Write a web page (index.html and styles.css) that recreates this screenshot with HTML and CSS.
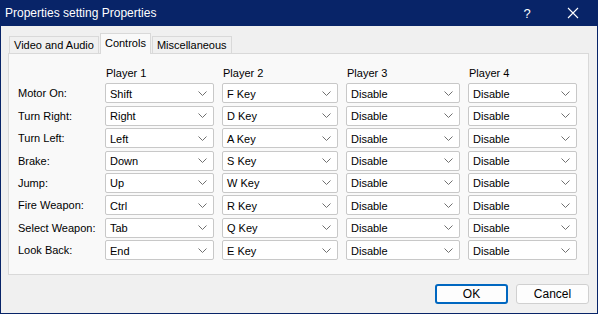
FILE: index.html
```html
<!DOCTYPE html>
<html lang="en">

<head>
    <meta charset="UTF-8">
    <title>Properties setting Properties</title>
    <link rel="stylesheet" href="styles.css">
</head>

<body>
    <div class="window">
        <!-- Title Bar -->
        <div class="title-bar">
            <span class="title">Properties setting Properties</span>
            <span class="title-btn help">?</span>
            <span class="title-btn close">
                <svg width="12" height="12" viewBox="0 0 12 12"><path d="M1 1L11 11M11 1L1 11" stroke="#fff" stroke-width="1.1" fill="none"/></svg>
            </span>
        </div>

        <div class="dialog-body">
            <!-- Tabs -->
            <div class="tabs">
                <div class="tab">Video and Audio</div>
                <div class="tab active">Controls</div>
                <div class="tab">Miscellaneous</div>
            </div>

            <!-- Controls Panel -->
            <div class="panel">
                <div class="controls-grid" id="controls-grid">
                    <div></div>
                    <div class="col-head">Player 1</div>
                    <div class="col-head">Player 2</div>
                    <div class="col-head">Player 3</div>
                    <div class="col-head">Player 4</div>
                </div>
            </div>

            <!-- Buttons -->
            <div class="button-row">
                <button class="dlg-button default">OK</button>
                <button class="dlg-button">Cancel</button>
            </div>
        </div>
    </div>

    <script>
        const actions = [
            { label: "Motor On:", keys: ["Shift", "F Key"] },
            { label: "Turn Right:", keys: ["Right", "D Key"] },
            { label: "Turn Left:", keys: ["Left", "A Key"] },
            { label: "Brake:", keys: ["Down", "S Key"] },
            { label: "Jump:", keys: ["Up", "W Key"] },
            { label: "Fire Weapon:", keys: ["Ctrl", "R Key"] },
            { label: "Select Weapon:", keys: ["Tab", "Q Key"] },
            { label: "Look Back:", keys: ["End", "E Key"] }
        ];

        const chevron = '<svg width="9" height="5" viewBox="0 0 9 5"><path d="M0.5 0.5L4.5 4.5L8.5 0.5" stroke="#707070" fill="none"/></svg>';

        function buildGrid() {
            const grid = document.getElementById('controls-grid');
            actions.forEach(action => {
                const label = document.createElement('div');
                label.className = 'row-label';
                label.textContent = action.label;
                grid.appendChild(label);

                const values = [action.keys[0], action.keys[1], "Disable", "Disable"];
                values.forEach(value => {
                    const combo = document.createElement('div');
                    combo.className = 'combo';
                    combo.innerHTML = `<span>${value}</span>${chevron}`;
                    grid.appendChild(combo);
                });
            });
        }

        buildGrid();
    </script>
</body>

</html>
```

FILE: styles.css
```css
/* Base Styles */
body {
    margin: 0;
    padding: 0;
    font-family: 'Liberation Sans', Arial, sans-serif;
    font-size: 11px;
    color: #000;
    background-color: #f0f0f0;
}

.window {
    width: 598px;
    height: 314px;
    box-sizing: border-box;
    border: 1px solid #082468;
    border-top: none;
    background-color: #f0f0f0;
    display: flex;
    flex-direction: column;
}

.title-bar {
    height: 26px;
    background-color: #082468;
    color: white;
    display: flex;
    align-items: center;
    margin: 0 -1px;
    padding-left: 5px;
}

.title {
    font-size: 12px;
    flex: 1;
}

.title-btn {
    width: 46px;
    display: flex;
    justify-content: center;
    align-items: center;
    font-size: 13px;
}

.close {
    margin-right: 2px;
}

.dialog-body {
    flex: 1;
    padding: 7px 8px 0 7px;
    display: flex;
    flex-direction: column;
}

/* Tabs */
.tabs {
    display: flex;
    align-items: flex-end;
    height: 20px;
    padding-left: 1px;
}

.tab {
    height: 17px;
    box-sizing: border-box;
    padding: 0 4px;
    border: 1px solid #d9d9d9;
    border-bottom: none;
    background-color: #f0f0f0;
    font-size: 11px;
    line-height: 16px;
    margin-right: 1px;
}

.tab.active {
    height: 21px;
    margin-bottom: -1px;
    background-color: #f9f9f9;
    position: relative;
    z-index: 1;
    line-height: 18px;
}

.panel {
    height: 222px;
    box-sizing: border-box;
    border: 1px solid #d9d9d9;
    background-color: #f9f9f9;
    padding: 11px 0 0 9px;
}

.controls-grid {
    display: grid;
    grid-template-columns: 79px 109px 116px 114px 109px;
    grid-template-rows: 16px;
    grid-auto-rows: 20px;
    column-gap: 8px;
    row-gap: 2.4px;
}

.col-head {
    padding-left: 1px;
    display: flex;
    align-items: center;
}

.row-label {
    display: flex;
    align-items: center;
}

.combo {
    box-sizing: border-box;
    border: 1px solid #c8c8c8;
    border-radius: 2px;
    background-color: white;
    display: flex;
    align-items: center;
    justify-content: space-between;
    padding: 0 6px 0 4px;
}

.combo span {
    padding-top: 1px;
}

/* Buttons */
.button-row {
    display: flex;
    justify-content: flex-end;
    gap: 8px;
    margin-top: 9px;
}

.dlg-button {
    width: 73px;
    height: 20px;
    box-sizing: border-box;
    border: 1px solid #d0d0d0;
    border-radius: 3px;
    background-color: #fdfdfd;
    font-family: 'Liberation Sans', Arial, sans-serif;
    font-size: 12px;
    padding: 0;
}

.dlg-button.default {
    border: 2px solid #0067c0;
}
```
